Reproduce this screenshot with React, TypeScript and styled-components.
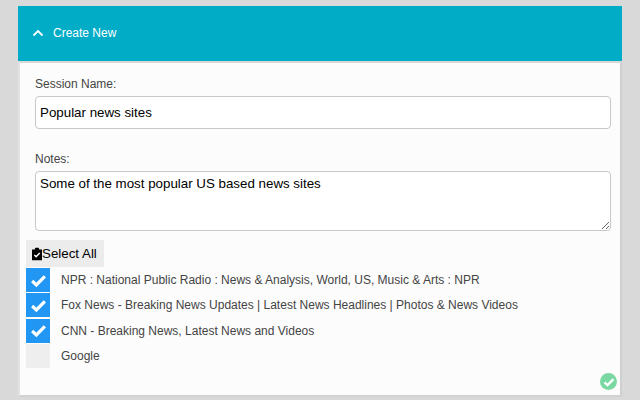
import { FC } from 'react';
import styled, { createGlobalStyle } from 'styled-components';

const GlobalStyle = createGlobalStyle`
  html, body {
    margin: 0;
    height: 400px;
    overflow: hidden;
    background: #d9d9d9;
    font-family: "Liberation Sans", Arial, sans-serif;
  }
`;

const Page = styled.div`
  padding: 6px 18px 0;
  height: 394px;
  box-sizing: content-box;
`;

const Header = styled.div`
  display: flex;
  align-items: center;
  gap: 9px;
  height: 55px;
  padding: 0 0 2px 14px;
  box-sizing: border-box;
  background: #00acc6;
  color: #fff;
  font-size: 12px;
`;

const Panel = styled.div`
  position: relative;
  box-sizing: border-box;
  height: 336px;
  padding: 14px 9px 0 6px;
  background: #fcfcfc;
  border-style: solid;
  border-width: 2px;
  border-color: #d8d8d8 #cfcfcf #d2d2d2 #e2e2e2;
`;

const Field = styled.div`
  padding-left: 9px;
`;

const FieldLabel = styled.label`
  display: block;
  height: 19px;
  color: #444;
  font-size: 12px;
  line-height: 14px;
`;

const TextInput = styled.input`
  display: block;
  box-sizing: border-box;
  width: 100%;
  height: 33px;
  margin-bottom: 23px;
  padding: 0 4px;
  background: #fff;
  border: 1px solid #c8c8c8;
  border-radius: 4px;
  outline: none;
  color: #000;
  font: 13.333px "Liberation Sans", Arial, sans-serif;
`;

const NotesInput = styled.textarea`
  display: block;
  box-sizing: border-box;
  width: 100%;
  height: 60px;
  margin: 0 0 9px;
  padding: 4px;
  background: #fff;
  border: 1px solid #c8c8c8;
  border-radius: 4px;
  outline: none;
  color: #000;
  font: 13.333px "Liberation Sans", Arial, sans-serif;
`;

const SelectAllButton = styled.div`
  display: flex;
  align-items: center;
  width: fit-content;
  height: 27px;
  margin-bottom: 1px;
  padding: 0 7px 0 6px;
  background: #ececec;
  color: #000;
  font-size: 13.333px;
`;

const Rows = styled.div`
  display: flex;
  flex-direction: column;
  gap: 1.4px;
`;

const Row = styled.div`
  display: flex;
  align-items: center;
  gap: 11px;
  height: 24px;
  color: #444;
  font-size: 12px;
`;

const Tick = styled.div<{ $checked: boolean }>`
  display: flex;
  align-items: center;
  justify-content: center;
  width: 24px;
  height: 24px;
  background: ${({ $checked }) => ($checked ? '#2196f3' : '#eeeeee')};
`;

const SavedBadge = styled.div`
  position: absolute;
  right: 3px;
  bottom: 5px;
  display: flex;
  align-items: center;
  justify-content: center;
  width: 17px;
  height: 17px;
  border-radius: 50%;
  background: #7ad9a3;
`;

const CheckMark: FC<{ size: number; weight: number }> = ({ size, weight }) => (
  <svg width={size} height={size} viewBox="0 0 16 16" fill="none">
    <path d="M2 8.5 6 12.2 14 4.2" stroke="#fff" strokeWidth={weight} />
  </svg>
);

const ClipboardIcon = () => (
  <svg width="10" height="14" viewBox="0 0 11 14">
    <path d="M0 2h3.2V1.2C3.2.5 3.8 0 4.4 0h2.2c.6 0 1.2.5 1.2 1.2V2H11v12H0z" fill="#000" />
    <path d="M2.6 8 4.6 10 8.5 5.8" stroke="#fff" strokeWidth="1.6" fill="none" />
  </svg>
);

const sites = [
  { title: 'NPR : National Public Radio : News & Analysis, World, US, Music & Arts : NPR', checked: true },
  { title: 'Fox News - Breaking News Updates | Latest News Headlines | Photos & News Videos', checked: true },
  { title: 'CNN - Breaking News, Latest News and Videos', checked: true },
  { title: 'Google', checked: false },
];

const App: FC = () => (
  <Page>
    <GlobalStyle />
    <Header>
      <svg width="12" height="12" viewBox="0 0 12 12" fill="none">
        <path d="M1.5 8.5 6 4l4.5 4.5" stroke="#fff" strokeWidth="1.8" />
      </svg>
      Create New
    </Header>
    <Panel>
      <Field>
        <FieldLabel>Session Name:</FieldLabel>
        <TextInput readOnly value="Popular news sites" />
        <FieldLabel>Notes:</FieldLabel>
        <NotesInput readOnly value="Some of the most popular US based news sites" />
      </Field>
      <SelectAllButton>
        <ClipboardIcon />
        Select All
      </SelectAllButton>
      <Rows>
        {sites.map(({ title, checked }) => (
          <Row key={title}>
            <Tick $checked={checked}>
              {checked && <CheckMark size={17} weight={3} />}
            </Tick>
            {title}
          </Row>
        ))}
      </Rows>
      <SavedBadge>
        <CheckMark size={12} weight={3} />
      </SavedBadge>
    </Panel>
  </Page>
);

export default App;
